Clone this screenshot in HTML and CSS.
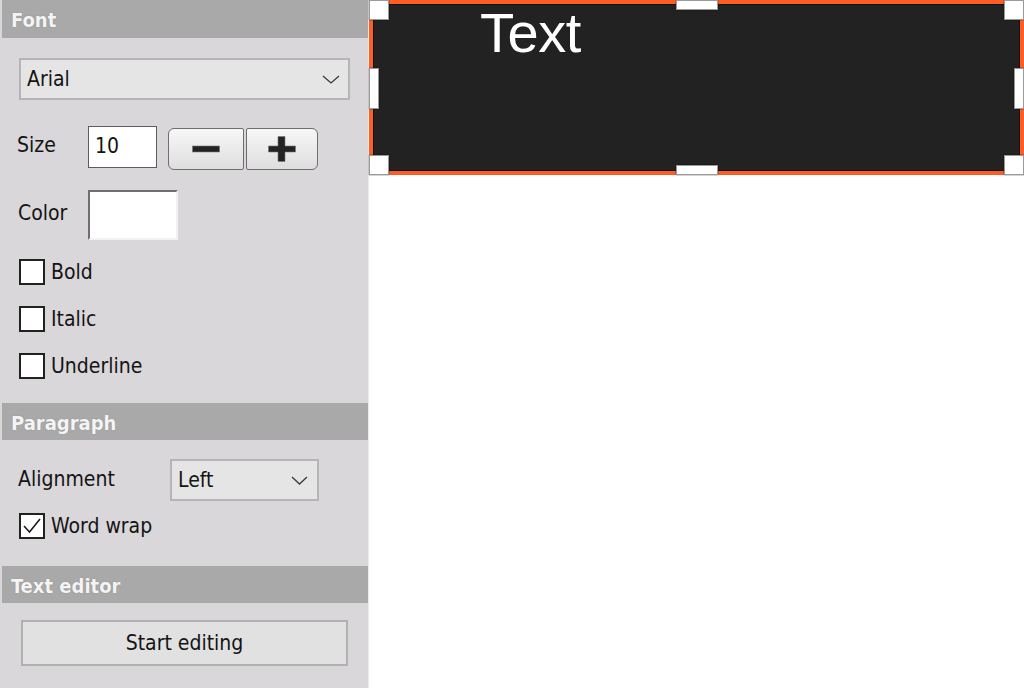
FILE: index.html
```html
<!DOCTYPE html>
<html>
<head>
<meta charset="utf-8">
<link rel="stylesheet" href="styles.css">
</head>
<body>
<div class="app">
  <aside class="sidebar">
    <div class="section-head">Font</div>
    <div class="section font-section">
      <div class="select select-font">
        <span>Arial</span>
        <svg class="chev" width="18" height="9" viewBox="0 0 18 9"><polyline points="1,1 9,8 17,1" fill="none" stroke="#3a3a3a" stroke-width="1.3"/></svg>
      </div>
      <div class="row size-row">
        <span class="label">Size</span>
        <div class="input">10</div>
        <div class="btn-group">
          <div class="sbtn sbtn-left">
            <svg width="28" height="8" viewBox="0 0 28 8"><rect x="0.5" y="1" width="27" height="6" fill="#232323" stroke="#777" stroke-width="0.6"/></svg>
          </div>
          <div class="sbtn sbtn-right">
            <svg width="28" height="26" viewBox="0 0 28 26"><path d="M10 0.5 H17 V10 H27.5 V16 H17 V25.5 H10 V16 H0.5 V10 H10 Z" fill="#232323" stroke="#777" stroke-width="0.6"/></svg>
          </div>
        </div>
      </div>
      <div class="row color-row">
        <span class="label">Color</span>
        <div class="swatch"></div>
      </div>
      <div class="checks">
        <label class="check"><span class="box"></span><span>Bold</span></label>
        <label class="check"><span class="box"></span><span>Italic</span></label>
        <label class="check"><span class="box"></span><span>Underline</span></label>
      </div>
    </div>
    <div class="section-head">Paragraph</div>
    <div class="section para-section">
      <div class="row align-row">
        <span class="label label-wide">Alignment</span>
        <div class="select select-align">
          <span>Left</span>
          <svg class="chev" width="17" height="9" viewBox="0 0 17 9"><polyline points="1,1 8.5,8 16,1" fill="none" stroke="#3a3a3a" stroke-width="1.3"/></svg>
        </div>
      </div>
      <label class="check wrap-check"><span class="box"><svg width="22" height="22" viewBox="0 0 22 22"><polyline points="3,11 8.5,17 19,4" fill="none" stroke="#1c1c1c" stroke-width="1.6"/></svg></span><span>Word wrap</span></label>
    </div>
    <div class="section-head">Text editor</div>
    <div class="section editor-section">
      <div class="wide-btn">Start editing</div>
    </div>
  </aside>
  <main class="canvas">
    <div class="textbox">
      <div class="textbox-inner">Text</div>
      <span class="h h-tl"></span>
      <span class="h h-tr"></span>
      <span class="h h-bl"></span>
      <span class="h h-br"></span>
      <span class="h h-t"></span>
      <span class="h h-b"></span>
      <span class="h h-l"></span>
      <span class="h h-r"></span>
    </div>
  </main>
</div>
</body>
</html>
```

FILE: styles.css
```css
html, body {
  margin: 0;
  padding: 0;
}
body {
  width: 1024px;
  height: 688px;
  overflow: hidden;
  background: #ffffff;
  font-family: "DejaVu Sans", "Liberation Sans", sans-serif;
  font-stretch: condensed;
  font-size: 21px;
  color: #141414;
}
.app {
  display: flex;
  height: 688px;
}
.sidebar {
  width: 368px;
  flex: none;
  background: #d9d7da;
  border-right: 1px solid #ebebeb;
  display: flex;
  flex-direction: column;
}
.section-head {
  margin-left: 2px;
  height: 37px;
  box-sizing: border-box;
  padding: 9px 0 0 9px;
  background: #a9a9a9;
  color: #f4f4f4;
  font-weight: bold;
  font-size: 20px;
  line-height: 22px;
  text-shadow: 0 0 1px rgba(80,80,80,0.5);
}
.section-head:first-child {
  height: 38px;
}
.section {
  display: flex;
  flex-direction: column;
}
.font-section {
  padding: 20px 0 24px 0;
}
.select {
  box-sizing: border-box;
  height: 42px;
  background: #e5e5e5;
  border: 2px solid #b5b5b5;
  display: flex;
  align-items: center;
  justify-content: space-between;
  padding: 0 8px 0 6px;
}
.select-font {
  margin-left: 19px;
  width: 331px;
}
.row {
  display: flex;
  align-items: center;
}
.label {
  width: 71px;
  padding-left: 17px;
  flex: none;
}
.size-row {
  margin-top: 26px;
  align-items: flex-start;
  height: 44px;
}
.size-row .label {
  margin-top: 7px;
}
.input {
  box-sizing: border-box;
  width: 69px;
  height: 42px;
  background: #ffffff;
  border: 1px solid #5c5c5c;
  padding: 7px 0 0 6px;
  line-height: 24px;
}
.btn-group {
  display: flex;
  margin-left: 11px;
  margin-top: 2px;
  gap: 2px;
}
.sbtn {
  box-sizing: border-box;
  height: 42px;
  border: 1px solid #6e6e6e;
  background: linear-gradient(#f7f7f7, #dedede);
  display: flex;
  align-items: center;
  justify-content: center;
}
.sbtn-left {
  width: 76px;
  border-radius: 6px 2px 2px 6px;
}
.sbtn-right {
  width: 72px;
  border-radius: 2px 6px 6px 2px;
}
.color-row {
  margin-top: 20px;
}
.color-row .label {
  padding-left: 18px;
  width: 70px;
  margin-top: -4px;
}
.swatch {
  box-sizing: border-box;
  width: 90px;
  height: 50px;
  background: #ffffff;
  border: 2px solid;
  border-color: #6f6f6f #f2f2f2 #f2f2f2 #6f6f6f;
}
.checks {
  display: flex;
  flex-direction: column;
  gap: 20px;
  margin-top: 18px;
}
.check {
  display: flex;
  align-items: center;
  gap: 6px;
  height: 27px;
  padding-left: 19px;
}
.box {
  box-sizing: border-box;
  width: 26px;
  height: 26px;
  flex: none;
  background: #ffffff;
  border: 2px solid #222222;
  display: flex;
  align-items: center;
  justify-content: center;
}
.para-section {
  padding: 19px 0 27px 0;
}
.align-row .label-wide {
  width: 152px;
  padding-left: 18px;
  margin-top: -2px;
}
.select-align {
  width: 149px;
  padding-right: 9px;
}
.wrap-check {
  margin-top: 11px;
}
.editor-section {
  padding: 17px 0 0 21px;
}
.wide-btn {
  box-sizing: border-box;
  width: 327px;
  height: 46px;
  background: #e1e1e1;
  border: 2px solid #b1b1b1;
  display: flex;
  align-items: center;
  justify-content: center;
}
.canvas {
  flex: 1;
  background: #ffffff;
}
.textbox {
  position: relative;
  box-sizing: border-box;
  width: 655px;
  height: 175px;
  border: 4px solid #ff5c26;
  background: #222222;
}
.textbox-inner {
  box-sizing: border-box;
  height: 100%;
  border: 1px solid #0e1416;
  padding: 0 0 0 106px;
  font-family: "Liberation Sans", Arial, sans-serif;
  font-stretch: normal;
  font-size: 56px;
  line-height: 56px;
  letter-spacing: -0.5px;
  color: #ffffff;
}
.h {
  position: absolute;
  box-sizing: border-box;
  background: #ffffff;
  border: 1px solid #9a9a9a;
  box-shadow: 0 0 1px #000;
}
.h-tl, .h-tr, .h-bl, .h-br {
  width: 20px;
  height: 20px;
}
.h-tl { left: -4px; top: -4px; }
.h-tr { right: -4px; top: -4px; }
.h-bl { left: -4px; bottom: -4px; }
.h-br { right: -4px; bottom: -4px; }
.h-t, .h-b {
  width: 42px;
  height: 10px;
  left: 50%;
  margin-left: -21px;
}
.h-t { top: -4px; }
.h-b { bottom: -4px; }
.h-l, .h-r {
  width: 10px;
  height: 41px;
  top: 50%;
  margin-top: -20px;
}
.h-l { left: -4px; }
.h-r { right: -4px; }
```
